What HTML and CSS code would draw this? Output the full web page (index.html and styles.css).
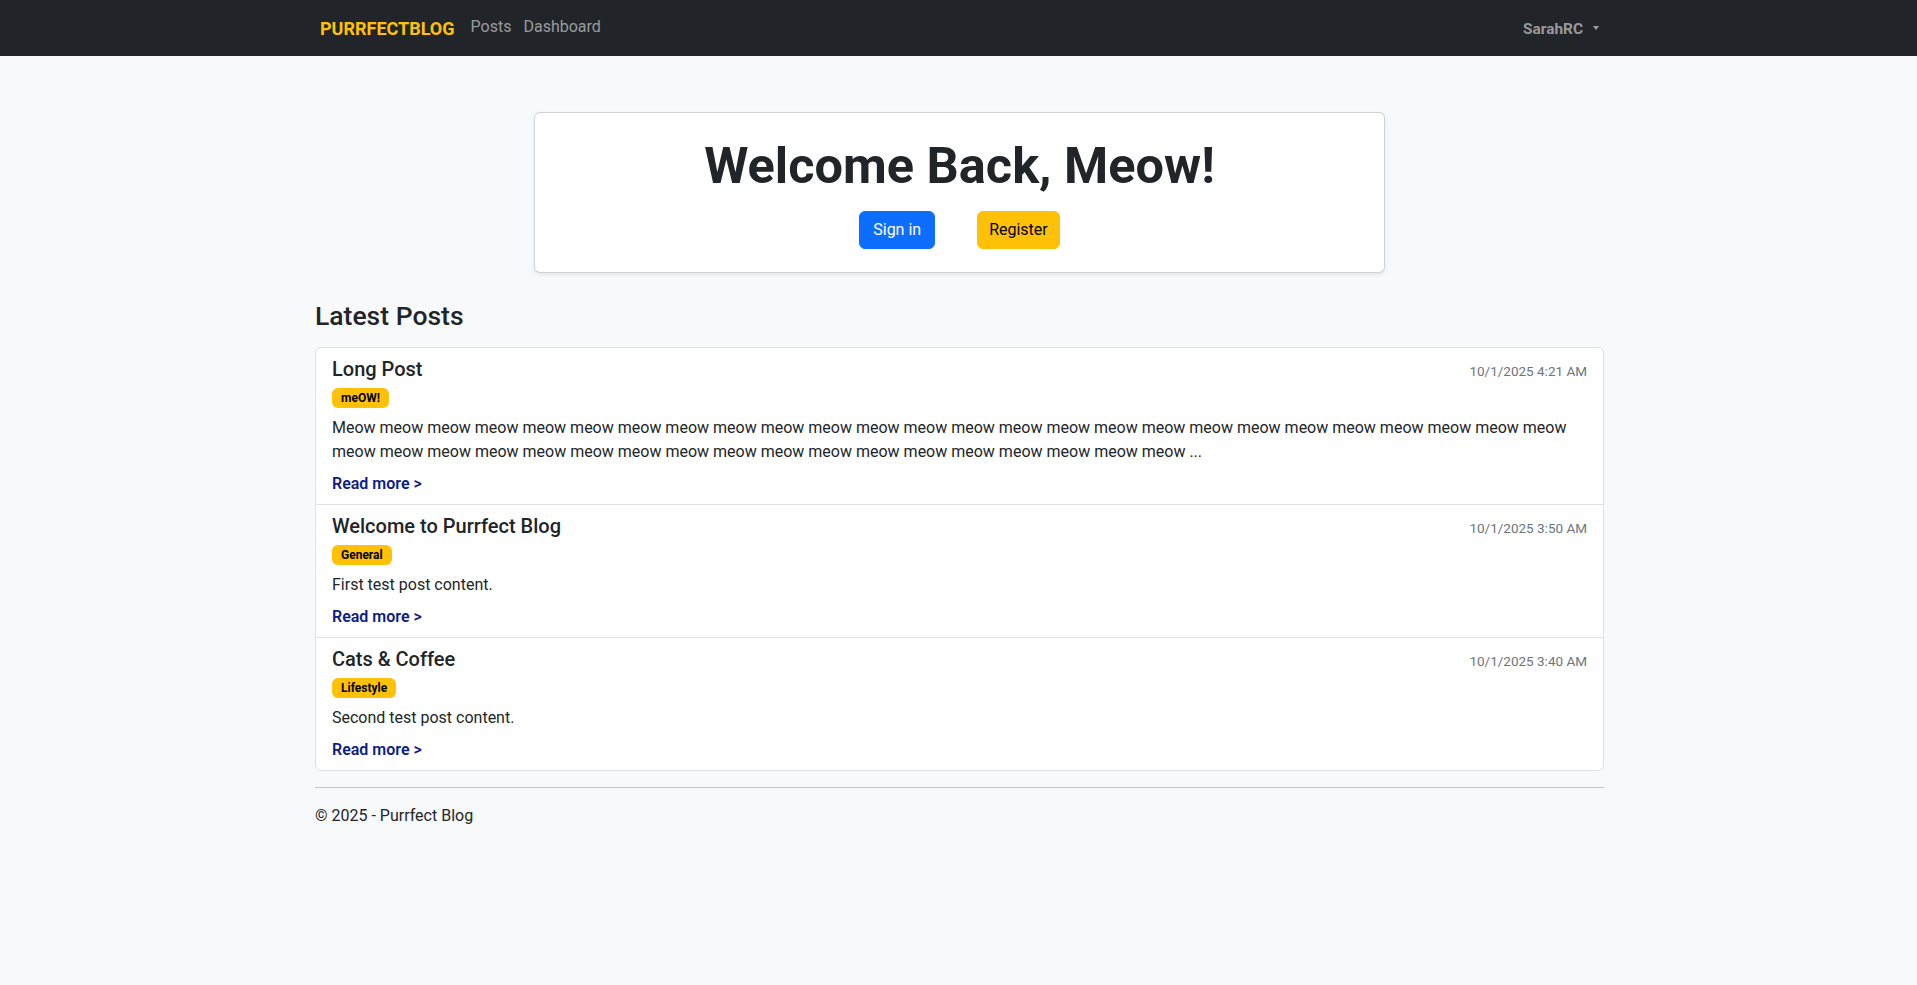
FILE: index.html
```html
<!DOCTYPE html>
<html lang="en">
<head>
<meta charset="utf-8">
<title>Purrfect Blog</title>
<link rel="stylesheet" href="styles.css">
</head>
<body>
<nav class="navbar">
  <div class="navbar-inner">
    <a class="brand" href="#">PURRFECTBLOG</a>
    <ul class="nav-links">
      <li><a class="nav-link" href="#">Posts</a></li>
      <li><a class="nav-link" href="#">Dashboard</a></li>
    </ul>
    <a class="user-toggle" href="#">SarahRC<span class="caret"></span></a>
  </div>
</nav>

<main class="container">
  <section class="hero-card">
    <h1 class="hero-title">Welcome Back, Meow!</h1>
    <div class="hero-actions">
      <a class="btn btn-primary" href="#">Sign in</a>
      <a class="btn btn-warning" href="#">Register</a>
    </div>
  </section>

  <h2 class="section-title">Latest Posts</h2>

  <div class="post-list">
    <article class="post-item">
      <div class="post-head">
        <h5 class="post-title">Long Post</h5>
        <small class="post-date">10/1/2025 4:21 AM</small>
      </div>
      <div class="post-tags"><span class="badge">meOW!</span></div>
      <p class="post-excerpt">Meow meow meow meow meow meow meow meow meow meow meow meow meow meow meow meow meow meow meow meow meow meow meow meow meow meow meow meow meow meow meow meow meow meow meow meow meow meow meow meow meow meow meow meow ...</p>
      <a class="read-more" href="#">Read more &gt;</a>
    </article>
    <article class="post-item">
      <div class="post-head">
        <h5 class="post-title">Welcome to Purrfect Blog</h5>
        <small class="post-date">10/1/2025 3:50 AM</small>
      </div>
      <div class="post-tags"><span class="badge">General</span></div>
      <p class="post-excerpt">First test post content.</p>
      <a class="read-more" href="#">Read more &gt;</a>
    </article>
    <article class="post-item">
      <div class="post-head">
        <h5 class="post-title">Cats &amp; Coffee</h5>
        <small class="post-date">10/1/2025 3:40 AM</small>
      </div>
      <div class="post-tags"><span class="badge">Lifestyle</span></div>
      <p class="post-excerpt">Second test post content.</p>
      <a class="read-more" href="#">Read more &gt;</a>
    </article>
  </div>

  <footer class="site-footer">
    <hr class="footer-rule">
    <p class="footer-text">&copy; 2025 - Purrfect Blog</p>
  </footer>
</main>
</body>
</html>
```
FILE: styles.css
```css
* { box-sizing: border-box; }

body {
  margin: 0;
  background: #f8f9fa;
  color: #212529;
  font-family: Roboto, "Liberation Sans", sans-serif;
  font-size: 16px;
  line-height: 24px;
}

a { text-decoration: none; }

/* Navbar */
.navbar {
  background: #212529;
  height: 56px;
}
.navbar-inner {
  width: 1279px;
  margin: 0 auto;
  height: 100%;
  display: flex;
  align-items: center;
  padding-left: 1px;
  padding-right: 0;
}
.brand {
  color: #ffc107;
  font-weight: 700;
  font-size: 18px;
  line-height: 27px;
  margin-right: 10px;
}
.nav-links {
  list-style: none;
  margin: 0;
  padding: 0;
  display: flex;
  flex: 1;
}
.nav-link {
  display: block;
  color: rgba(255, 255, 255, 0.55);
  padding: 0 6px;
  line-height: 24px;
  margin-top: -2px;
}
.user-toggle {
  display: flex;
  align-items: center;
  color: rgba(255, 255, 255, 0.55);
  font-weight: 700;
  font-size: 15.4px;
  line-height: 24px;
  margin-top: 2px;
  margin-right: -1px;
}
.caret {
  display: inline-block;
  margin-left: 10px;
  margin-top: -3px;
  border-top: 4px solid rgba(255, 255, 255, 0.55);
  border-left: 3.5px solid transparent;
  border-right: 3.5px solid transparent;
}

/* Main container */
.container {
  width: 1291px;
  margin: 0 auto;
  padding: 56px 0 0 2px;
}

.hero-card {
  width: 851px;
  margin: 0 auto;
  background: #fff;
  border: 1px solid rgba(0, 0, 0, 0.175);
  border-radius: 6px;
  box-shadow: 0 2px 4px rgba(0, 0, 0, 0.075);
  padding: 24px 24px 23px;
  text-align: center;
}
.hero-title {
  margin: 0 0 17px;
  font-size: 50.5px;
  font-weight: 700;
  line-height: 57px;
  color: #212529;
}
.hero-actions {
  display: flex;
  justify-content: center;
  gap: 42px;
}
.btn {
  display: inline-block;
  height: 38px;
  padding: 6px 12px;
  border: 1px solid transparent;
  border-radius: 6px;
  font-size: 16px;
  line-height: 24px;
}
.btn-primary {
  background: #0d6efd;
  border-color: #0d6efd;
  color: #fff;
  padding: 6px 13px;
}
.btn-warning {
  background: #ffc107;
  border-color: #ffc107;
  color: #000;
  padding: 6px 11px;
}

.section-title {
  margin: 26px 0 14px;
  font-size: 26.5px;
  font-weight: 500;
  line-height: 34px;
}

/* Post list */
.post-list {
  background: #fff;
  border: 1px solid #dee2e6;
  border-radius: 6px;
}
.post-item {
  padding: 8px 16px;
}
.post-item + .post-item {
  border-top: 1px solid #dee2e6;
}
.post-head {
  display: flex;
  justify-content: space-between;
  align-items: baseline;
  height: 24px;
  margin-bottom: 8px;
}
.post-title {
  margin: 0;
  font-size: 20px;
  font-weight: 500;
  line-height: 24px;
  padding-top: 1px;
}
.post-date {
  color: #6c757d;
  font-size: 13.5px;
  line-height: 16px;
}
.post-tags {
  display: flex;
  margin-bottom: 8px;
}
.badge {
  display: inline-block;
  background: #ffc107;
  color: #000;
  font-size: 12px;
  font-weight: 700;
  line-height: 12px;
  padding: 4px 9px;
  border-radius: 6px;
}
.post-excerpt {
  margin: 0 0 8px;
}
.read-more {
  display: inline-block;
  color: #0b1d86;
  font-weight: 600;
}

/* Footer */
.site-footer {
  margin-top: 16px;
}
.footer-rule {
  margin: 0 0 16px;
  border: 0;
  border-top: 1px solid #c2c4c6;
}
.footer-text {
  margin: 0;
}
```
